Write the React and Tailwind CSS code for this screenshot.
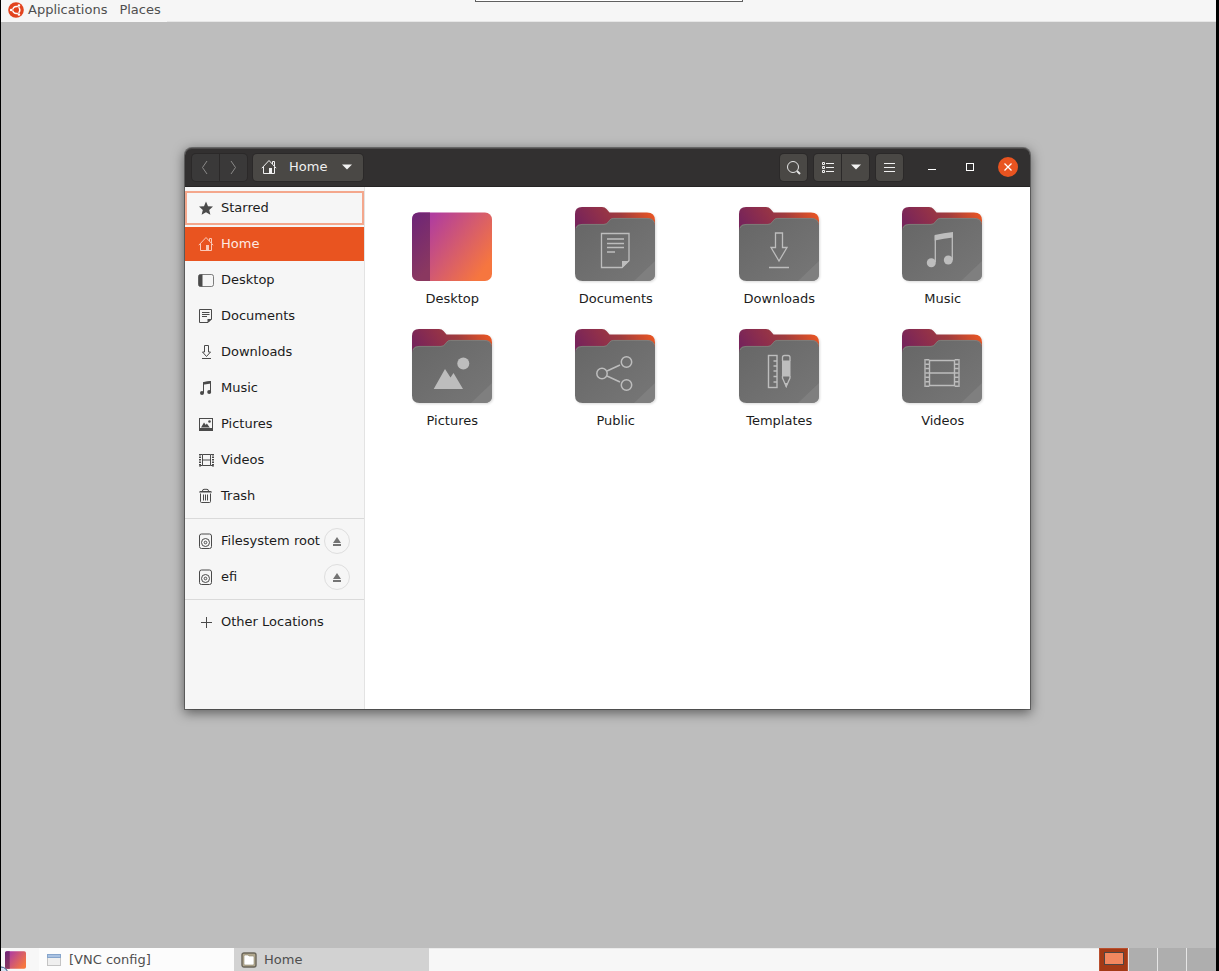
import { useState } from 'react'

const places = [
  { id: 'starred', label: 'Starred' },
  { id: 'home', label: 'Home' },
  { id: 'desktop', label: 'Desktop' },
  { id: 'documents', label: 'Documents' },
  { id: 'downloads', label: 'Downloads' },
  { id: 'music', label: 'Music' },
  { id: 'pictures', label: 'Pictures' },
  { id: 'videos', label: 'Videos' },
  { id: 'trash', label: 'Trash' }
]

const drives = [
  { id: 'root', label: 'Filesystem root' },
  { id: 'efi', label: 'efi' }
]

const folders = ['Desktop', 'Documents', 'Downloads', 'Music', 'Pictures', 'Public', 'Templates', 'Videos']

const line = { fill: 'none', stroke: 'currentColor' }

const smallIcons = {
  starred: <path d="M8 1.5l2 4.7 5 .4-3.8 3.3 1.2 4.9L8 12.2l-4.4 2.6 1.2-4.9L1 6.600l5-.4z" fill="currentColor" />,
  home: (
    <>
      <path d="M.8 9.200L8 1.500l7.200 7.700M2.500 7.800v6.700h11V7.800M11.500 5V2.500h2v4.500" {...line} />
      <path d="M8 9h3v6H8z" fill="currentColor" />
    </>
  ),
  desktop: (
    <>
      <rect x="0.500" y="2.500" width="15" height="12" rx="2" {...line} strokeOpacity="0.700" />
      <path d="M4.500 2.500H2q-1.500 0-1.500 2v8q0 2 1.500 2h2.500z" fill="currentColor" />
    </>
  ),
  documents: (
    <>
      <path d="M1.500 1.500h12v9.500l-3.500 3.500H1.500z" {...line} />
      <path d="M4 4.500h7.500M4 6.500h7.500M4 8.500h5" {...line} />
      <path d="M9.500 11H14l-4.500 4z" fill="currentColor" />
    </>
  ),
  downloads: (
    <path d="M6.500 1.500h4v6.500h2L8.500 12.500 4.500 8h2zM4 14.500h9" {...line} />
  ),
  music: (
    <>
      <path d="M5.500 13V2.500l7-1V12" {...line} />
      <path d="M5 2.200l8-1.200v2.500L5 4.700z" fill="currentColor" />
      <circle cx="4" cy="13" r="2" fill="currentColor" />
      <circle cx="11.200" cy="12" r="2" fill="currentColor" />
    </>
  ),
  pictures: (
    <>
      <rect x="1.500" y="2.500" width="13" height="12" {...line} />
      <path d="M1 12h14v3H1zM3 11.500l3-5 1.800 2.500 1-1.500 3 4z" fill="currentColor" />
      <circle cx="11.500" cy="5.500" r="1.300" fill="currentColor" />
    </>
  ),
  videos: (
    <>
      <path d="M4.500 2.500h8v11h-8zM4.500 8h8" {...line} />
      <path d="M1.500 2.500h3M1.500 13.500h3M12.500 2.500h3M12.500 13.500h3" {...line} />
      <path d="M2 2v13M15 2v13" {...line} strokeWidth="2" strokeDasharray="1.500 1" />
    </>
  ),
  trash: (
    <>
      <path d="M2.500 5.500v8q0 1 1 1h8q1 0 1-1v-8M5.500 6.500v6M7.500 6.500v6M9.500 6.500v6" {...line} />
      <path d="M1 4.500q0-1.500 1.500-1.500h10q1.500 0 1.500 1.500z" fill="currentColor" />
      <path d="M4.500 3q0-1.700 1.500-1.700h3q1.500 0 1.500 1.700" {...line} />
    </>
  ),
  root: <DriveShape />,
  efi: <DriveShape />,
  other: <path d="M8.500 3v11M3 8.500h11" {...line} />
}

function DriveShape() {
  return (
    <>
      <rect x="1.500" y="1" width="12" height="14.500" rx="2" fill="none" stroke="currentColor" />
      <circle cx="7.500" cy="9.500" r="4" fill="none" stroke="currentColor" />
      <circle cx="7.500" cy="9.500" r="1.300" fill="none" stroke="currentColor" />
    </>
  )
}

function SmallIcon({ name, className }) {
  return (
    <svg viewBox="0 0 16 16" className={`size-4 shrink-0 ${className || ''}`} aria-hidden="true">
      {smallIcons[name]}
    </svg>
  )
}

const emblems = {
  Documents: (
    <>
      <path d="M26.500 29.500h27.500v27l-7 7H26.500z" {...line} strokeWidth="1.300" />
      <path d="M32 35h17M32 39.500h17M32 43.500h17M32 48h8" {...line} strokeWidth="1.300" />
      <path d="M47 57h7.500L47 64z" fill="currentColor" />
    </>
  ),
  Downloads: (
    <path d="M36.500 29h7v14.500h4.500L40 57l-8-13.500h4.500zM30 63.500h20" {...line} strokeWidth="1.300" />
  ),
  Music: (
    <>
      <path d="M33.300 58V31.500M50.300 56V29" {...line} strokeWidth="1.300" />
      <path d="M32.700 31q9-2.200 18.300-3v5.500q-9 .8-18.300 3z" fill="currentColor" />
      <circle cx="29.300" cy="58.700" r="4.500" fill="currentColor" />
      <circle cx="46.300" cy="56" r="4.500" fill="currentColor" />
    </>
  ),
  Pictures: (
    <>
      <path d="M21.700 63L33 43l5.500 8.500 3-4.500L51 63z" fill="currentColor" />
      <circle cx="51.300" cy="37.500" r="6" fill="currentColor" />
    </>
  ),
  Public: (
    <>
      <circle cx="27" cy="47.500" r="5.200" {...line} strokeWidth="1.500" />
      <circle cx="51.500" cy="36" r="5.200" {...line} strokeWidth="1.500" />
      <circle cx="51.500" cy="59" r="5.200" {...line} strokeWidth="1.500" />
      <path d="M32 45l13-6M32 50l13 6" {...line} strokeWidth="1.500" />
    </>
  ),
  Templates: (
    <>
      <rect x="29.500" y="29.500" width="8.500" height="32" {...line} strokeWidth="1.400" />
      <path d="M34.500 35H38M34.500 40H38M34.500 45H38M34.500 50.500H38M34.500 56H38" {...line} strokeWidth="1.400" />
      <path d="M43.500 35v-3.500q0-2 2-2h3.500q2 0 2 2V35M43.500 50v2l3.700 8.500L51 52v-2" {...line} strokeWidth="1.300" />
      <path d="M43 34.500h8.500v16H43zM45.500 57h3.500l-1.800 5z" fill="currentColor" />
    </>
  ),
  Videos: (
    <>
      <path d="M27.500 34.500h25v25h-25zM27.500 47h25" {...line} strokeWidth="1.400" />
      <path d="M23 33v28M57 33v28" {...line} strokeWidth="1.300" />
      <path d="M25.300 33v28M54.700 33v28" {...line} strokeWidth="4" strokeDasharray="1.500 2.900" />
    </>
  )
}

function FolderDefs() {
  return (
    <svg className="absolute size-0" aria-hidden="true">
      <defs>
        <linearGradient id="folder-back" x1="0" y1="0.300" x2="1" y2="0">
          <stop offset="0" stopColor="#77245a" />
          <stop offset="0.300" stopColor="#8f2f4b" />
          <stop offset="0.550" stopColor="#a03c3e" />
          <stop offset="1" stopColor="#f75a1e" />
        </linearGradient>
        <linearGradient id="folder-front" x1="0" y1="0" x2="1" y2="1">
          <stop offset="0" stopColor="#666666" />
          <stop offset="1" stopColor="#777777" />
        </linearGradient>
        <linearGradient id="desktop-fill" gradientUnits="userSpaceOnUse" x1="16" y1="16" x2="76" y2="60">
          <stop offset="0" stopColor="#b03c9f" />
          <stop offset="0.500" stopColor="#d35a70" />
          <stop offset="1" stopColor="#f6763f" />
        </linearGradient>
        <linearGradient id="desktop-strip" x1="0" y1="0" x2="0.300" y2="1">
          <stop offset="0" stopColor="#6d2478" />
          <stop offset="1" stopColor="#8a3860" />
        </linearGradient>
      </defs>
    </svg>
  )
}

function DesktopShape({ className }) {
  return (
    <svg viewBox="0 8 80 70" preserveAspectRatio="none" className={className} aria-hidden="true">
      <rect x="0" y="8.500" width="80" height="68.500" rx="7" fill="url(#desktop-fill)" />
      <path d="M18 8.500H7q-7 0-7 7V70q0 7 7 7h11z" fill="url(#desktop-strip)" />
    </svg>
  )
}

function FolderShape({ name }) {
  return (
    <svg viewBox="0 0 80 80" className="size-20 overflow-visible drop-shadow-[1px_1px_1px_rgba(0,0,0,0.15)]" aria-hidden="true">
      <path d="M0 30V10q0-7 7-7h20q3 0 4.500 2l3 3.500H72q8 0 8 8V40z" fill="url(#folder-back)" />
      <path d="M0 69.500V27q0-7 7-7h22q2.500 0 4-2l1.500-2q1.500-2 4-2H72q8 0 8 7.500v48q0 7.500-7.500 7.500h-65Q0 77 0 69.500z" fill="url(#folder-front)" />
      <path d="M1 24q1-3.600 6-3.600h22q2.500 0 4-2l1.500-2q1.500-2 4-2H72q6 0 7.500 4.500" fill="none" stroke="#8a8480" strokeWidth="0.700" />
      <path d="M59 77l21-20v12.500q0 7.500-7.500 7.500z" fill="#7f7f7f" />
      <g className="text-[#bdbdbd]">{emblems[name]}</g>
    </svg>
  )
}

function Caret() {
  return (
    <svg viewBox="0 0 10 6" className="h-[6px] w-[10px] shrink-0" aria-hidden="true">
      <path d="M0 .5h10L5 5.500z" fill="#f2f2f2" />
    </svg>
  )
}

function TopPanel() {
  return (
    <header className="relative flex h-[22px] shrink-0 bg-[#f6f6f6] text-[#4f4f4f]">
      <nav className="flex h-[22px] w-[166px] items-start pl-[7px]">
        <button className="flex h-5 items-center gap-1">
          <svg viewBox="0 0 16 16" className="size-4" aria-hidden="true">
            <circle cx="8" cy="8" r="7.800" fill="#e2431e" />
            <circle cx="8.300" cy="8" r="3.500" fill="none" stroke="#fff" strokeWidth="1.600" />
            <path d="M8.300 8L3 8M8.300 8l3 5M8.300 8l3-5" stroke="#e2431e" strokeWidth="1" />
            <circle cx="3.200" cy="8" r="1.300" fill="#fff" />
            <circle cx="10.900" cy="3.500" r="1.300" fill="#fff" />
            <circle cx="10.900" cy="12.500" r="1.300" fill="#fff" />
          </svg>
          Applications
        </button>
        <button className="ml-3 h-5">Places</button>
      </nav>
      <div className="grow border-b border-[#e6e6e6]" />
      <div className="absolute top-0 left-[474px] h-[2px] w-[268px] border-x border-b border-[#606060] bg-white" />
    </header>
  )
}

function TitleBar() {
  const box = 'flex items-center bg-[#4a4845] shadow-[0_0_0_1px_#2b2929]'
  return (
    <div className="flex h-[39px] items-center rounded-t-[7px] border-b border-[#262424] bg-[#323030] pr-[3px] pl-[7px] text-[#f0f0f0] shadow-[inset_0_1px_0_#4c4a4a]">
      <div className="flex gap-px rounded-[4px] bg-[#2b2929] shadow-[0_0_0_1px_#2b2929]">
        <button aria-label="Back" className="flex size-[27px] items-center justify-center rounded-l-[4px] bg-[#3a3939]">
          <svg viewBox="0 0 15 15" className="size-[15px]" aria-hidden="true">
            <path d="M9 1L4.500 7.500 9 14" fill="none" stroke="#8b8a89" />
          </svg>
        </button>
        <button aria-label="Forward" className="flex size-[27px] items-center justify-center rounded-r-[4px] bg-[#3a3939]">
          <svg viewBox="0 0 15 15" className="size-[15px]" aria-hidden="true">
            <path d="M5 1l4.500 6.500L5 14" fill="none" stroke="#8b8a89" />
          </svg>
        </button>
      </div>
      <button className={`${box} ml-[6px] h-[27px] w-[110px] rounded-[4px] pl-2`}>
        <SmallIcon name="home" />
        <span className="mr-[15px] ml-3">Home</span>
        <Caret />
      </button>
      <div className="grow" />
      <button aria-label="Search" className={`${box} size-[27px] justify-center rounded-[4px]`}>
        <svg viewBox="0 0 15 15" className="size-[15px]" fill="none" stroke="#e6e6e6" aria-hidden="true">
          <circle cx="7" cy="7" r="5.500" />
          <path d="M11 11l3 3" strokeWidth="2" />
        </svg>
      </button>
      <div className="ml-[7px] flex gap-px">
        <button aria-label="List view" className={`${box} size-[27px] justify-center rounded-l-[4px]`}>
          <svg viewBox="0 0 13 13" className="size-[13px]" fill="none" stroke="#f0f0f0" aria-hidden="true">
            <path d="M1.500 1.500h2v2h-2zM1.500 5.500h2v2h-2zM1.500 9.500h2v2h-2zM5 2.500h8M5 6.500h8M5 10.500h8" />
          </svg>
        </button>
        <button aria-label="View options" className={`${box} size-[27px] justify-center rounded-r-[4px]`}>
          <Caret />
        </button>
      </div>
      <button aria-label="Menu" className={`${box} ml-[7px] size-[27px] justify-center rounded-[4px]`}>
        <svg viewBox="0 0 11 11" className="size-[11px]" stroke="#f0f0f0" aria-hidden="true">
          <path d="M0 1.500h11M0 5.500h11M0 9.500h11" />
        </svg>
      </button>
      <button aria-label="Minimize" className="ml-[10px] flex h-[27px] w-[38px] items-center justify-center">
        <span className="mt-1 h-px w-2 bg-white" />
      </button>
      <button aria-label="Maximize" className="flex h-[27px] w-[38px] items-center justify-center">
        <span className="size-2 border border-white" />
      </button>
      <button aria-label="Close" className="flex h-[27px] w-[38px] items-center justify-center">
        <span className="flex size-5 items-center justify-center rounded-full bg-[#e95420]">
          <svg viewBox="0 0 8 8" className="size-2" stroke="#fff" strokeWidth="1.300" aria-hidden="true">
            <path d="M.5.5l7 7M7.500.5l-7 7" />
          </svg>
        </span>
      </button>
    </div>
  )
}

function Sidebar({ active, onSelect }) {
  const rowClass = (id) => {
    if (id === active) return 'bg-[#e95420] text-[#fdeae3]'
    if (id === 'starred') return 'text-[#1c1c1c] outline-2 -outline-offset-2 outline-[#f4a78c]'
    return 'text-[#1c1c1c]'
  }

  return (
    <aside className="w-[180px] shrink-0 border-r border-[#e3e3e3] bg-[#f6f6f6] pt-1">
      <ul className="flex flex-col gap-[2px]">
        {places.map((place) => (
          <li key={place.id}>
            <button
              onClick={() => onSelect(place.id)}
              className={`flex h-[34px] w-full items-center gap-[7px] pl-[13px] ${rowClass(place.id)}`}
            >
              <SmallIcon name={place.id} className={place.id === active ? 'text-[#fac9b8]' : 'text-[#4a4a4a]'} />
              {place.label}
            </button>
          </li>
        ))}
      </ul>
      <ul className="my-[5px] flex flex-col gap-[2px] border-y border-[#dadada] py-[5px]">
        {drives.map((drive) => (
          <li key={drive.id} className="flex h-[34px] items-center justify-between pr-[14px] pl-[13px]">
            <button className="flex items-center gap-[7px] whitespace-nowrap text-[#1c1c1c]">
              <SmallIcon name={drive.id} className="text-[#4a4a4a]" />
              {drive.label}
            </button>
            <button
              aria-label={`Eject ${drive.label}`}
              className="flex size-[26px] shrink-0 items-center justify-center rounded-full border border-[#dedede]"
            >
              <svg viewBox="0 0 8 9" className="h-[9px] w-2" aria-hidden="true">
                <path d="M4 0l4 6H0zM0 7h8v2H0z" fill="#747474" />
              </svg>
            </button>
          </li>
        ))}
      </ul>
      <button className="flex h-[34px] w-full items-center gap-[7px] pl-[13px] text-[#1c1c1c]">
        <SmallIcon name="other" className="text-[#4a4a4a]" />
        Other Locations
      </button>
    </aside>
  )
}

function FileWindow() {
  const [active, setActive] = useState('home')

  return (
    <section className="rounded-t-[7px] shadow-[0_0_0_1px_rgba(0,0,0,0.35),0_3px_12px_1px_rgba(0,0,0,0.5)]">
      <TitleBar />
      <div className="flex min-h-[522px]">
        <Sidebar active={active} onSelect={setActive} />
        <div className="grow bg-white pt-[17px] pr-[6px] pl-[5px]">
          <div className="grid grid-cols-4 gap-y-[17px]">
            {folders.map((name) => (
              <button key={name} className="flex flex-col items-center text-[#1c1c1c]">
                {name === 'Desktop' ? <DesktopShape className="mt-2 mb-[2px] h-[70px] w-20" /> : <FolderShape name={name} />}
                <span className="mt-[5px] pl-px leading-5">{name}</span>
              </button>
            ))}
          </div>
        </div>
      </div>
    </section>
  )
}

function Taskbar() {
  return (
    <footer className="flex h-[23px] shrink-0 overflow-hidden bg-[#f7f7f7] text-[#4f4f4f]">
      <button aria-label="Show desktop" className="relative flex h-[23px] w-[38px] shrink-0 items-center pt-px pl-1">
        <DesktopShape className="h-[18px] w-[21px]" />
        <svg viewBox="0 0 8 5" className="absolute bottom-0 left-0 h-[5px] w-2" aria-hidden="true">
          <circle cx="0" cy="8" r="7" fill="#d5e2f2" stroke="#33557f" />
        </svg>
      </button>
      <button className="flex w-[195px] items-center bg-[#fcfcfc] pl-2">
        <svg viewBox="0 0 14 12" className="h-3 w-[14px]" aria-hidden="true">
          <rect x=".5" y=".5" width="13" height="11" fill="#efefef" stroke="#c4c4c4" />
          <path d="M0 0h14v4H0z" fill="#86a5cc" />
          <path d="M1 1h12v2H1z" fill="#a9c2e2" />
        </svg>
        <span className="ml-2">[VNC config]</span>
      </button>
      <button className="flex w-[195px] items-center bg-[#d2d2d2] pl-[7px]">
        <svg viewBox="0 0 16 16" className="size-4" aria-hidden="true">
          <rect x="1" y="1" width="14" height="14" rx="2" fill="#b3a98f" stroke="#6b665a" strokeWidth="1.400" />
          <path d="M3 4.500q0-1.500 1-1.500h3l1 1h4q1 0 1 1v7q0 1-1 1H4q-1 0-1-1z" fill="#fff" stroke="#8f8871" strokeWidth="0.600" />
        </svg>
        <span className="ml-[7px]">Home</span>
      </button>
      <div className="grow border-t border-[#ebebeb]" />
      <div className="flex gap-px bg-[#e6e6e6]">
        <button aria-label="Workspace 1" className="flex w-[29px] justify-center border border-b-0 border-[#b9502f] bg-[#a33a16] pt-[3px]">
          <span className="h-[13px] w-5 border border-[#4d4644] bg-[#f2875f]" />
        </button>
        <button aria-label="Workspace 2" className="w-7 bg-[#aeaeae]" />
        <button aria-label="Workspace 3" className="w-7 bg-[#aeaeae]" />
        <button aria-label="Workspace 4" className="w-[29px] bg-[#aeaeae]" />
      </div>
    </footer>
  )
}

export default function App() {
  return (
    <div className="flex min-h-screen flex-col border-r-[3px] border-l border-black bg-[#bdbdbd] font-['DejaVu_Sans',sans-serif] text-[13px] leading-5">
      <FolderDefs />
      <TopPanel />
      <main className="grow pt-[126px] pr-[186px] pb-10 pl-[184px]">
        <FileWindow />
      </main>
      <Taskbar />
    </div>
  )
}
